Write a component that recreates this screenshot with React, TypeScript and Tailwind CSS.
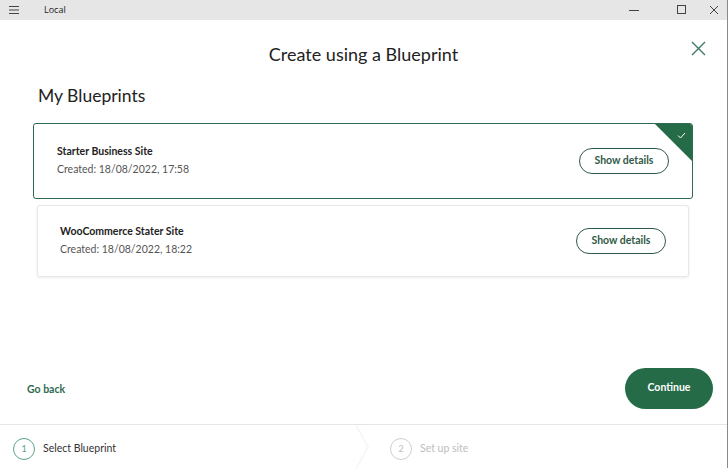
import React from "react";

const font = { fontFamily: "Lato, 'Open Sans', sans-serif" };

function Card({
  title,
  created,
  selected,
}: {
  title: string;
  created: string;
  selected?: boolean;
}) {
  return (
    <div
      className={
        selected
          ? "relative flex items-center justify-between overflow-hidden rounded-[3px] border-[1.5px] border-[#2f6b51] bg-white h-[76px] pl-[23px] pr-[23px]"
          : "relative flex items-center justify-between rounded-[3px] border border-[#e8e8e8] bg-white h-[72px] pl-[22px] pr-[22px] shadow-[0_1px_3px_rgba(0,0,0,0.08)]"
      }
    >
      <div className="flex flex-col gap-[2px]">
        <div className="text-[10.5px] font-bold text-[#222]">{title}</div>
        <div className="text-[10.5px] text-[#555]">{created}</div>
      </div>
      <button className="h-[26px] w-[90px] rounded-full border-[1.5px] border-[#2f5a47] text-[10.5px] font-bold text-[#2f5a47] bg-white">
        Show details
      </button>
      {selected && (
        <svg
          className="absolute right-0 top-0"
          width="37"
          height="37"
          viewBox="0 0 37 37"
        >
          <polygon points="0,0 37,0 37,37" fill="#256b47" />
          <path
            d="M23 11.5 L25.5 14 L30 9"
            stroke="white"
            strokeWidth="1"
            fill="none"
          />
        </svg>
      )}
    </div>
  );
}

export default function App() {
  return (
    <div
      className="relative flex h-[468px] w-[728px] flex-col overflow-hidden bg-white border-r border-[#8a8a8a]"
      style={font}
    >
      {/* title bar */}
      <div className="flex h-[20px] shrink-0 items-center bg-[#e6e6e6] text-[#333]">
        <div className="flex w-[28px] justify-center">
          <svg width="10" height="8" viewBox="0 0 10 8">
            <path d="M0 0.5H10M0 4H10M0 7.5H10" stroke="#444" strokeWidth="1" />
          </svg>
        </div>
        <div
          className="ml-[16px] text-[9px] text-[#222]"
          style={{ fontFamily: "'Open Sans', sans-serif" }}
        >
          Local
        </div>
        <div className="ml-auto -mr-[3px] flex h-full items-center gap-[16px]">
          <div className="flex w-[32px] justify-center">
            <svg width="10" height="10" viewBox="0 0 10 10">
              <path d="M0 5.5H10" stroke="#444" strokeWidth="1" />
            </svg>
          </div>
          <div className="flex w-[32px] justify-center">
            <svg width="10" height="10" viewBox="0 0 10 10">
              <rect x="0.5" y="0.5" width="8" height="8" stroke="#444" fill="none" />
            </svg>
          </div>
          <div className="-ml-[16px] flex w-[32px] justify-center">
            <svg width="10" height="10" viewBox="0 0 10 10">
              <path d="M1 1L9 9M9 1L1 9" stroke="#444" strokeWidth="1" />
            </svg>
          </div>
        </div>
      </div>

      {/* header */}
      <div className="relative flex h-[64px] shrink-0 items-center justify-center">
        <div className="mt-[5px] text-[18px] text-[#222]">Create using a Blueprint</div>
        <svg
          className="absolute right-[21px] top-[21px]"
          width="15"
          height="15"
          viewBox="0 0 15 15"
        >
          <path d="M1 1L14 14M14 1L1 14" stroke="#3e7a62" strokeWidth="1.4" />
        </svg>
      </div>

      {/* body */}
      <div className="flex flex-1 flex-col pl-[35px] pr-[36px]">
        <div className="ml-[3px] mt-[3px] text-[17.5px] leading-none text-[#222]">
          My Blueprints
        </div>
        <div className="mt-[18px] flex flex-col gap-[6px]">
          <div className="-mx-[2px]">
            <Card
              title="Starter Business Site"
              created="Created: 18/08/2022, 17:58"
              selected
            />
          </div>
          <div className="mx-[2px]">
            <Card
              title="WooCommerce Stater Site"
              created="Created: 18/08/2022, 18:22"
            />
          </div>
        </div>
      </div>

      {/* footer actions */}
      <div className="flex h-[66px] shrink-0 items-center justify-between pl-[27px] pr-[14px] pb-[6px]">
        <div className="mt-[4px] text-[10.5px] font-bold text-[#2f6b51]">Go back</div>
        <button className="h-[41px] w-[88px] rounded-full bg-[#256b47] text-[10.5px] font-bold text-white">
          Continue
        </button>
      </div>

      {/* stepper */}
      <div className="relative flex h-[44px] shrink-0 items-center border-t border-[#e6e6e6] pt-[4px]">
        <div className="flex w-[377px] items-center pl-[13px]">
          <div className="flex h-[22px] w-[22px] items-center justify-center rounded-full border-[1.5px] border-[#5aa588] text-[9px] text-[#5aa588]">
            1
          </div>
          <div className="ml-[8px] text-[10.5px] text-[#333]">Select Blueprint</div>
        </div>
        <svg
          className="absolute left-[355px] top-0"
          width="16"
          height="44"
          viewBox="0 0 16 44"
        >
          <path d="M1 0L13 22L1 44" stroke="#f7f7f7" strokeWidth="2" fill="none" />
        </svg>
        <div className="flex items-center pl-[13px]">
          <div className="flex h-[22px] w-[22px] items-center justify-center rounded-full border-[1.5px] border-[#cfcfcf] text-[9px] text-[#bdbdbd]">
            2
          </div>
          <div className="ml-[8px] text-[10.5px] text-[#bdbdbd]">Set up site</div>
        </div>
      </div>
    </div>
  );
}
